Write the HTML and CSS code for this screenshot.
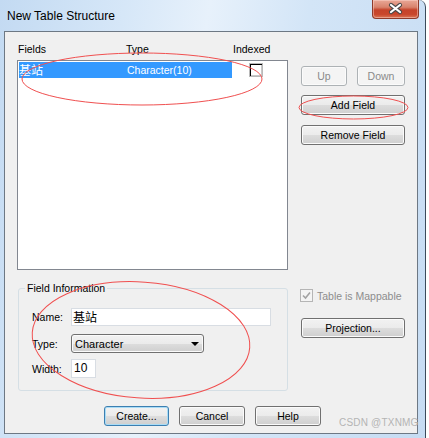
FILE: index.html
```html
<!DOCTYPE html>
<html>
<head>
    <title>New Table Structure</title>
    <link rel="stylesheet" href="styles.css">
</head>
<body>
    <div class="window">
        <div class="titlebar">
            <div class="title">New Table Structure</div>
            <div class="close-btn">
                <svg width="45" height="18" viewBox="0 0 45 18">
                    <path d="M18 5 L27 12 M27 5 L18 12" stroke="#4a4a4a" stroke-width="4.2" stroke-linecap="round"/>
                    <path d="M18 5 L27 12 M27 5 L18 12" stroke="#ffffff" stroke-width="2.2" stroke-linecap="round"/>
                </svg>
            </div>
        </div>

        <div class="client">
            <div class="top-row">
                <div class="left-col">
                    <div class="headers">
                        <span>Fields</span>
                        <span>Type</span>
                        <span>Indexed</span>
                    </div>
                    <div class="list">
                        <div class="list-item">
                            <div class="item-sel">
                                <span class="cjk">基站</span>
                                <span>Character(10)</span>
                            </div>
                            <div class="list-check"></div>
                        </div>
                    </div>
                </div>
                <div class="right-col">
                    <div class="btn-pair">
                        <div class="btn disabled btn-up">Up</div>
                        <div class="btn disabled btn-down">Down</div>
                    </div>
                    <div class="btn btn-add">Add Field</div>
                    <div class="btn btn-remove">Remove Field</div>
                </div>
            </div>

            <div class="bottom-row">
                <div class="group">
                    <div class="group-title">Field Information</div>
                    <div class="form-row row-name">
                        <span class="form-label">Name:</span>
                        <div class="textbox name-box cjk">基站</div>
                    </div>
                    <div class="form-row row-type">
                        <span class="form-label">Type:</span>
                        <div class="combo">
                            <span>Character</span>
                            <span class="arrow"></span>
                        </div>
                    </div>
                    <div class="form-row row-width">
                        <span class="form-label">Width:</span>
                        <div class="textbox width-box">10</div>
                    </div>
                </div>
                <div class="right-col-bottom">
                    <div class="mappable">
                        <div class="check-disabled">
                            <svg width="9" height="9" viewBox="0 0 9 9">
                                <path d="M1 4.5 L3.5 7 L8 1.5" fill="none" stroke="#a3a3a3" stroke-width="1.6"/>
                            </svg>
                        </div>
                        <span>Table is Mappable</span>
                    </div>
                    <div class="btn btn-proj">Projection...</div>
                </div>
            </div>

            <div class="footer">
                <div class="btn btn-default">Create...</div>
                <div class="btn btn-cancel">Cancel</div>
                <div class="btn btn-help">Help</div>
            </div>
        </div>

        <!-- red annotation marks drawn over the dialog -->
        <svg class="marks" width="429" height="438" viewBox="0 0 429 438">
            <ellipse cx="142" cy="79" rx="120" ry="26" fill="none" stroke="#f05050" stroke-width="1"/>
            <ellipse cx="353.5" cy="107.5" rx="54.5" ry="11.5" fill="none" stroke="#f05050" stroke-width="1"/>
            <ellipse cx="141" cy="340" rx="109" ry="58" transform="rotate(4 141 340)" fill="none" stroke="#f05050" stroke-width="1"/>
        </svg>
        <div class="watermark">CSDN @TXNMG</div>
    </div>
</body>
</html>
```

FILE: styles.css
```css
body {
    margin: 0;
    background-color: #ffffff;
    font-family: "Liberation Sans", Arial, "Noto Sans CJK SC", sans-serif;
    font-size: 10.5px;
    color: #000;
}
.cjk {
    font-family: "Noto Sans CJK SC", sans-serif;
    font-size: 12px;
}
.window {
    position: relative;
    width: 426px;
    height: 438px;
    box-sizing: border-box;
    border-right: 1px solid #3b4b5c;
    border-top-right-radius: 7px;
    background: linear-gradient(100deg, #c3daf2 0%, #d6e7f8 25%, #e7f1fb 42%, #d3e5f7 62%, #c6dcf3 100%);
    overflow: hidden;
}
.titlebar {
    height: 31px;
    display: flex;
    justify-content: space-between;
    align-items: flex-start;
}
.title {
    padding: 9px 0 0 7px;
    font-size: 12px;
    line-height: 14px;
}
.close-btn {
    width: 47px;
    height: 19px;
    margin-right: 6px;
    box-sizing: border-box;
    border: 1px solid #8e3b2b;
    border-top: none;
    border-radius: 0 0 4px 4px;
    background: linear-gradient(#e9a897 0%, #d8836d 40%, #c5432a 55%, #c9472c 80%, #da7656 100%);
    box-shadow: inset 0 0 0 1px rgba(255, 220, 210, 0.45);
}
.close-btn svg {
    display: block;
}
.client {
    margin-left: 4px;
    width: 414px;
    height: 403px;
    box-sizing: border-box;
    border: 1px solid #6d7884;
    background-color: #f0f0f0;
}

/* top part: list and buttons */
.top-row {
    display: flex;
    height: 238px;
    padding-left: 12px;
}
.left-col {
    width: 271px;
}
.headers {
    height: 28px;
    box-sizing: border-box;
    padding: 11px 0 0 1px;
    display: grid;
    grid-template-columns: 108px 107px auto;
    line-height: 13px;
}
.list {
    height: 210px;
    box-sizing: border-box;
    border: 1px solid #828790;
    background-color: #fff;
}
.list-item {
    display: flex;
    align-items: center;
    height: 16px;
    margin-top: 1px;
}
.item-sel {
    margin-left: 1px;
    width: 213px;
    height: 16px;
    background-color: #3399ff;
    color: #fff;
    display: grid;
    grid-template-columns: 108px auto;
    line-height: 16px;
}
.list-check {
    margin-left: 17px;
    width: 14px;
    height: 14px;
    box-sizing: border-box;
    border: 1px solid #b9b9b9;
    box-shadow: inset 1px 1px 0 #000, inset -1px -1px 0 #c8c8c8;
    background-color: #fff;
}
.right-col {
    margin-left: 13px;
    width: 104px;
    padding-top: 34px;
}
.btn-pair {
    display: flex;
    gap: 10px;
}
.btn {
    box-sizing: border-box;
    height: 20px;
    border: 1px solid #707070;
    border-radius: 3px;
    background: linear-gradient(#f2f2f2 0%, #ebebeb 50%, #dddddd 50%, #cfcfcf 100%);
    box-shadow: inset 0 0 0 1px #fbfbfb;
    text-align: center;
    line-height: 18px;
}
.btn.disabled {
    border-color: #adb2b5;
    background: #f4f4f4;
    color: #8a8a8a;
}
.btn-up {
    width: 46px;
}
.btn-down {
    width: 48px;
}
.btn-add {
    margin-top: 9px;
}
.btn-remove {
    margin-top: 10px;
}

/* bottom part: field information */
.bottom-row {
    display: flex;
    height: 121px;
    padding-left: 12px;
}
.group {
    margin: 18px 0 0 1px;
    width: 270px;
    height: 103px;
    box-sizing: border-box;
    border: 1px solid #d5dfe5;
    border-radius: 3px;
}
.group-title {
    width: fit-content;
    margin: -7px 0 0 6px;
    padding: 0 2px;
    background-color: #f0f0f0;
    line-height: 13px;
}
.form-row {
    display: flex;
    align-items: center;
    margin-left: 13px;
}
.form-label {
    width: 39px;
}
.row-name {
    margin-top: 13px;
}
.row-type {
    margin-top: 8px;
}
.row-width {
    margin-top: 6px;
}
.textbox {
    box-sizing: border-box;
    border: 1px solid #d8dde3;
    background-color: #fff;
}
.name-box {
    width: 200px;
    height: 18px;
    line-height: 16px;
    padding-left: 1px;
}
.width-box {
    width: 25px;
    height: 19px;
    line-height: 17px;
    padding-left: 2px;
    font-size: 12px;
}
.combo {
    width: 133px;
    height: 19px;
    box-sizing: border-box;
    border: 1px solid #707070;
    border-radius: 3px;
    background: linear-gradient(#f2f2f2 0%, #ebebeb 50%, #dddddd 50%, #cfcfcf 100%);
    box-shadow: inset 0 0 0 1px #fbfbfb;
    display: flex;
    justify-content: space-between;
    align-items: center;
    padding: 0 4px 0 3px;
    font-size: 11px;
}
.arrow {
    width: 0;
    height: 0;
    border-left: 4px solid transparent;
    border-right: 4px solid transparent;
    border-top: 4px solid #000;
}
.right-col-bottom {
    margin-left: 13px;
    width: 104px;
    padding-top: 19px;
}
.mappable {
    display: flex;
    align-items: center;
    height: 13px;
    color: #8d8d8d;
}
.check-disabled {
    margin-left: -1px;
    width: 13px;
    height: 13px;
    box-sizing: border-box;
    border: 1px solid #b5b5b5;
    background-color: #f4f4f4;
    display: flex;
    align-items: center;
    justify-content: center;
    margin-right: 4px;
}
.check-disabled svg {
    display: block;
}
.btn-proj {
    margin-top: 16px;
}

/* dialog buttons */
.footer {
    display: flex;
    justify-content: center;
    gap: 10px;
    margin-top: 15px;
    padding-left: 3px;
}
.btn-default {
    width: 65px;
    border-color: #3c7fb1;
    box-shadow: inset 0 0 0 1px #a9dcf6;
}
.btn-cancel,
.btn-help {
    width: 66px;
}

.marks {
    position: absolute;
    left: 0;
    top: 0;
    pointer-events: none;
}
.watermark {
    position: absolute;
    left: 339px;
    top: 417px;
    font-size: 10px;
    line-height: 12px;
    color: #b4b4b4;
    letter-spacing: 0.2px;
}
```
